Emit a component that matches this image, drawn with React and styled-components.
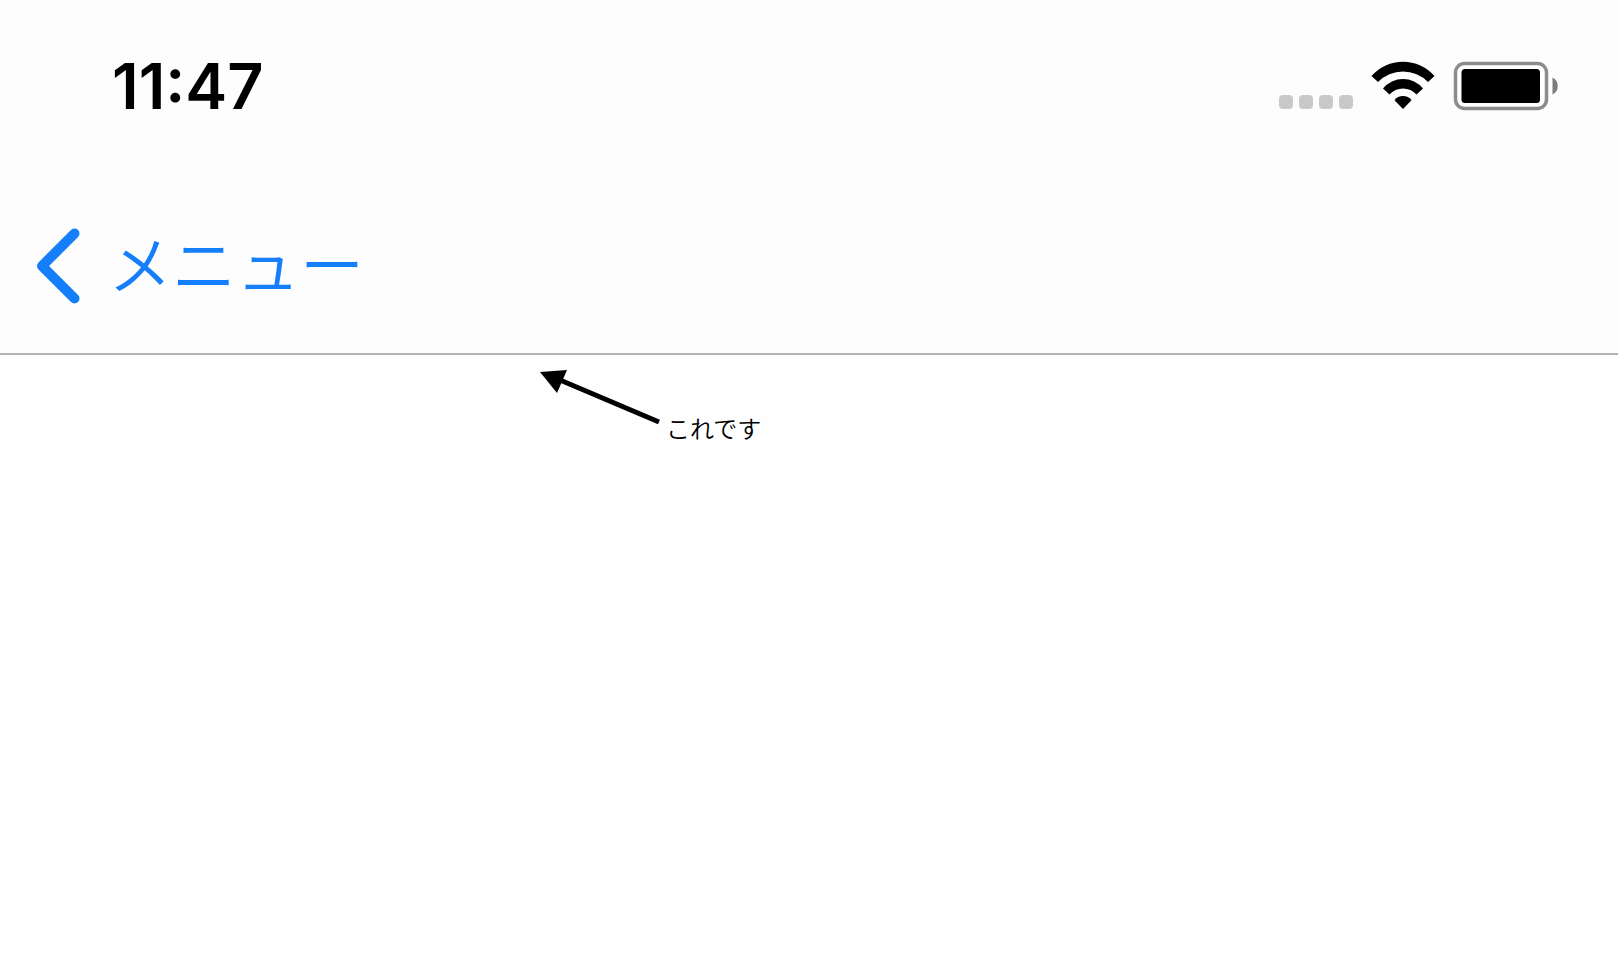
import React from 'react';
import styled, { createGlobalStyle } from 'styled-components';


const App = () => {
    const backHandler = () => {
        window.history.back();
    };

    return (
        <Screen>
            <GlobalStyle />
            <Header>
                <StatusBar>
                    <Time>11:47</Time>
                    <StatusIcons>
                        <Signal>
                            <Dot />
                            <Dot />
                            <Dot />
                            <Dot />
                        </Signal>
                        <Wifi viewBox="0 0 64 50" aria-hidden="true">
                            <path d="M0.500 15 A41.800 41.800 0 0 1 63.500 15 L57 21 A35 35 0 0 0 7 21 Z" />
                            <path d="M12 27.500 A25.800 25.800 0 0 1 52 27.500 L45.500 33.500 A18.200 18.200 0 0 0 18.500 33.500 Z" />
                            <path d="M23.500 39.300 A10.500 10.500 0 0 1 40.500 39.300 L32 48 Z" />
                        </Wifi>
                        <Battery viewBox="0 0 106 50" aria-hidden="true">
                            <rect x="2.500" y="2.500" width="91" height="45" rx="9" fill="#fff" stroke="#8c8c8c" strokeWidth="3.500" />
                            <rect x="8.500" y="8" width="78.500" height="34" rx="3.500" fill="#000" />
                            <path d="M99.500 16.500 A9.500 9.500 0 0 1 99.500 33.500 Z" fill="#7d7d7d" />
                        </Battery>
                    </StatusIcons>
                </StatusBar>
                <NavBar>
                    <BackButton type="button" onClick={backHandler}>
                        <Chevron viewBox="0 0 44 76" aria-hidden="true">
                            <path d="M38.500 5.500 L6 38 L38.500 70.500" />
                        </Chevron>
                        <BackText>メニュー</BackText>
                    </BackButton>
                </NavBar>
            </Header>
            <Content>
                <Note>
                    <Arrow viewBox="0 0 122 56" aria-hidden="true">
                        <path d="M20 10 L119 52" stroke="#000" strokeWidth="5" />
                        <path d="M0 2 L27 0 L17 23 Z" />
                    </Arrow>
                    <NoteText>これです</NoteText>
                </Note>
            </Content>
        </Screen>
    );
}

export default App;

const GlobalStyle = createGlobalStyle`
  body {
    margin: 0;
    background: #fefefe;
    color: #000;
    font-family: Inter, "Noto Sans CJK JP", sans-serif;
  }
`;

const Screen = styled.div`
  min-height: 100vh;
  display: flex;
  flex-direction: column;
`;

const Header = styled.header`
  background: #fdfdfd;
  border-bottom: 2px solid #b2b2b2;
`;

const StatusBar = styled.div`
  height: 172px;
  display: flex;
  box-sizing: border-box;
  padding: 0 59px 0 112px;
  justify-content: space-between;
  align-items: center;
`;

const Time = styled.span`
  font-size: 63px;
  font-weight: 600;
  line-height: 72px;
`;

const StatusIcons = styled.div`
  display: flex;
  align-items: flex-end;
  gap: 18px;
`;

const Signal = styled.div`
  display: flex;
  gap: 6px;
  padding-bottom: 2px;
`;

const Dot = styled.span`
  width: 14px;
  height: 14px;
  border-radius: 4px;
  background: #c9c9c9;
`;

const Wifi = styled.svg`
  width: 64px;
  height: 50px;
`;

const Battery = styled.svg`
  width: 106px;
  height: 50px;
`;

const NavBar = styled.nav`
  height: 181px;
  display: flex;
  box-sizing: border-box;
  padding: 6px 36px 0;
  align-items: center;
`;

const BackButton = styled.button`
  display: flex;
  align-items: center;
  gap: 28px;
  padding: 0;
  border: none;
  background: none;
  color: #147efb;
  font-family: inherit;
  cursor: pointer;
`;

const Chevron = styled.svg`
  width: 44px;
  height: 76px;
  fill: none;
  stroke: currentColor;
  stroke-width: 10;
  stroke-linecap: round;
  stroke-linejoin: round;
`;

const BackText = styled.span`
  font-size: 64px;
  font-weight: 350;
  line-height: 76px;
`;

const Content = styled.main`
  flex: 1;
  padding: 15px 36px 36px;
`;

const Note = styled.div`
  display: flex;
  align-items: flex-end;
  gap: 4px;
  margin-left: 504px;
`;

const Arrow = styled.svg`
  width: 122px;
  height: 56px;
`;

const NoteText = styled.span`
  font-size: 24px;
  font-weight: 350;
  line-height: 24px;
  margin-bottom: -16px;
`;
